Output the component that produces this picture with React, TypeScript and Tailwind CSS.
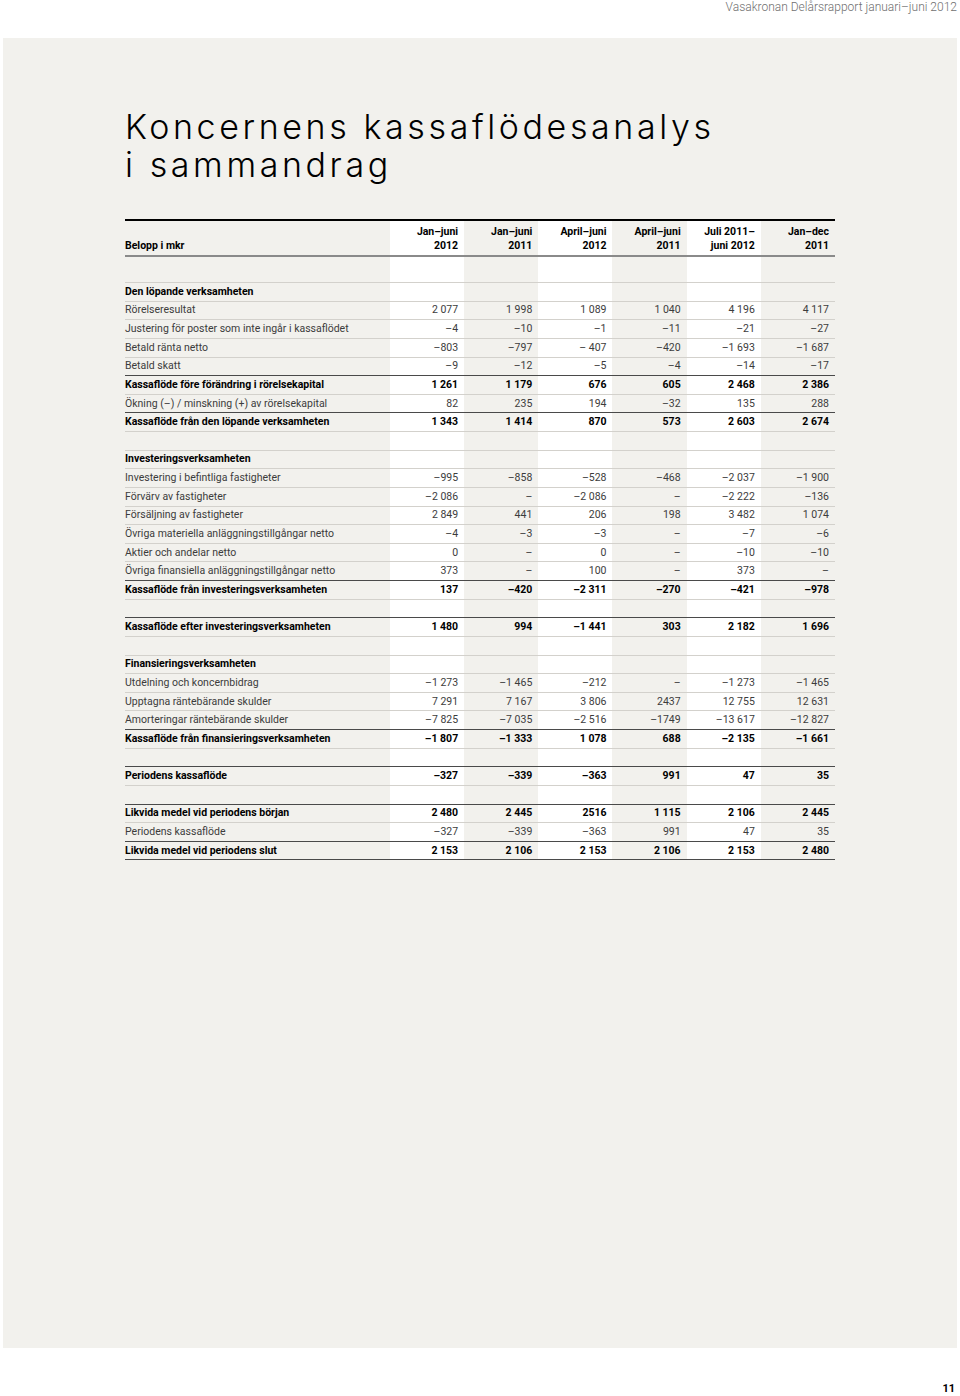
import React from "react";

// rader i tabellen
type Row =
  | { kind: "blank" }
  | { kind: "section"; label: string }
  | { kind: "row" | "total"; label: string; values: string[] };

const rows: Row[] = [
  { kind: "section", label: "Den löpande verksamheten" },
  { kind: "row", label: "Rörelseresultat", values: ["2 077", "1 998", "1 089", "1 040", "4 196", "4 117"] },
  { kind: "row", label: "Justering för poster som inte ingår i kassaflödet", values: ["–4", "–10", "–1", "–11", "–21", "–27"] },
  { kind: "row", label: "Betald ränta netto", values: ["–803", "–797", "– 407", "–420", "–1 693", "–1 687"] },
  { kind: "row", label: "Betald skatt", values: ["–9", "–12", "–5", "–4", "–14", "–17"] },
  { kind: "total", label: "Kassaflöde före förändring i rörelsekapital", values: ["1 261", "1 179", "676", "605", "2 468", "2 386"] },
  { kind: "row", label: "Ökning (–) / minskning (+) av rörelsekapital", values: ["82", "235", "194", "–32", "135", "288"] },
  { kind: "total", label: "Kassaflöde från den löpande verksamheten", values: ["1 343", "1 414", "870", "573", "2 603", "2 674"] },
  { kind: "blank" },
  { kind: "section", label: "Investeringsverksamheten" },
  { kind: "row", label: "Investering i befintliga fastigheter", values: ["–995", "–858", "–528", "–468", "–2 037", "–1 900"] },
  { kind: "row", label: "Förvärv av fastigheter", values: ["–2 086", "–", "–2 086", "–", "–2 222", "–136"] },
  { kind: "row", label: "Försäljning av fastigheter", values: ["2 849", "441", "206", "198", "3 482", "1 074"] },
  { kind: "row", label: "Övriga materiella anläggningstillgångar netto", values: ["–4", "–3", "–3", "–", "–7", "–6"] },
  { kind: "row", label: "Aktier och andelar netto", values: ["0", "–", "0", "–", "–10", "–10"] },
  { kind: "row", label: "Övriga finansiella anläggningstillgångar netto", values: ["373", "–", "100", "–", "373", "–"] },
  { kind: "total", label: "Kassaflöde från investeringsverksamheten", values: ["137", "–420", "–2 311", "–270", "–421", "–978"] },
  { kind: "blank" },
  { kind: "total", label: "Kassaflöde efter investeringsverksamheten", values: ["1 480", "994", "–1 441", "303", "2 182", "1 696"] },
  { kind: "blank" },
  { kind: "section", label: "Finansieringsverksamheten" },
  { kind: "row", label: "Utdelning och koncernbidrag", values: ["–1 273", "–1 465", "–212", "–", "–1 273", "–1 465"] },
  { kind: "row", label: "Upptagna räntebärande skulder", values: ["7 291", "7 167", "3 806", "2437", "12 755", "12 631"] },
  { kind: "row", label: "Amorteringar räntebärande skulder", values: ["–7 825", "–7 035", "–2 516", "–1749", "–13 617", "–12 827"] },
  { kind: "total", label: "Kassaflöde från finansieringsverksamheten", values: ["–1 807", "–1 333", "1 078", "688", "–2 135", "–1 661"] },
  { kind: "blank" },
  { kind: "total", label: "Periodens kassaflöde", values: ["–327", "–339", "–363", "991", "47", "35"] },
  { kind: "blank" },
  { kind: "total", label: "Likvida medel vid periodens början", values: ["2 480", "2 445", "2516", "1 115", "2 106", "2 445"] },
  { kind: "row", label: "Periodens kassaflöde", values: ["–327", "–339", "–363", "991", "47", "35"] },
  { kind: "total", label: "Likvida medel vid periodens slut", values: ["2 153", "2 106", "2 153", "2 106", "2 153", "2 480"] },
];

const headers = [
  ["Jan–juni", "2012"],
  ["Jan–juni", "2011"],
  ["April–juni", "2012"],
  ["April–juni", "2011"],
  ["Juli 2011–", "juni 2012"],
  ["Jan–dec", "2011"],
];

// vita kolumner: 1, 3, 5
const colBg = (i: number) => (i % 2 === 0 ? "bg-white" : "");

const TableRow: React.FC<{ row: Row; darkLine: boolean }> = ({ row, darkLine }) => {
  const border = darkLine ? "border-[#4a4a4a]" : "border-[#d3d1cc]";
  const bold = row.kind === "total" || row.kind === "section";
  return (
    <div className={`grid h-[18.63px] grid-cols-[265px_repeat(6,1fr)] border-b ${border}`}>
      <div
        className={`flex items-center whitespace-nowrap ${
          bold ? "font-bold text-black" : "text-[#3c3c3c]"
        }`}
      >
        {row.kind !== "blank" ? row.label : ""}
      </div>
      {headers.map((_, i) => (
        <div
          key={i}
          className={`flex items-center justify-end pr-[6px] ${colBg(i)} ${
            row.kind === "total" ? "font-bold text-black" : "text-[#3c3c3c]"
          }`}
        >
          {row.kind === "row" || row.kind === "total" ? row.values[i] : ""}
        </div>
      ))}
    </div>
  );
};

export default function App() {
  return (
    <div className="relative h-[1396px] w-[960px] bg-white font-['Roboto',sans-serif]">
      {/* sidhuvud */}
      <div className="flex h-[38px] justify-end pr-[3px] text-[12px] font-light leading-[14px] text-[#6f6f6f]">
        Vasakronan Delårsrapport januari–juni 2012
      </div>

      {/* panel */}
      <div className="mx-[3px] h-[1310px] bg-[#f2f1ed] pl-[122px] pt-[70px]">
        <h1 className="font-['Inter',sans-serif] text-[34px] font-light leading-[38px] tracking-[3.6px] text-black">
          Koncernens kassaflödesanalys
          <br />
          i sammandrag
        </h1>

        <div className="mt-[35px] w-[710px] text-[10.5px] leading-[14px]">
          {/* tabellhuvud */}
          <div className="grid grid-cols-[265px_repeat(6,1fr)] border-t-2 border-b-2 border-t-black border-b-[#8a8a8a]">
            <div className="flex items-end pb-[2px] font-bold text-black">Belopp i mkr</div>
            {headers.map((h, i) => (
              <div
                key={i}
                className={`flex flex-col items-end justify-end pb-[2px] pr-[6px] pt-[4px] text-right font-bold text-black ${colBg(i)}`}
              >
                <span>{h[0]}</span>
                <span>{h[1]}</span>
              </div>
            ))}
          </div>
          <div className="grid h-[26px] grid-cols-[265px_repeat(6,1fr)] border-b border-[#d3d1cc]">
            <div />
            {headers.map((_, i) => (
              <div key={i} className={colBg(i)} />
            ))}
          </div>

          {rows.map((row, idx) => {
            const next = rows[idx + 1];
            const darkLine = !next || next.kind === "total";
            return <TableRow key={idx} row={row} darkLine={darkLine} />;
          })}
        </div>
      </div>

      {/* sidnummer */}
      <div className="flex justify-end pr-[5px] pt-[34px] text-[11px] font-bold leading-[14px] text-black">
        11
      </div>
    </div>
  );
}
